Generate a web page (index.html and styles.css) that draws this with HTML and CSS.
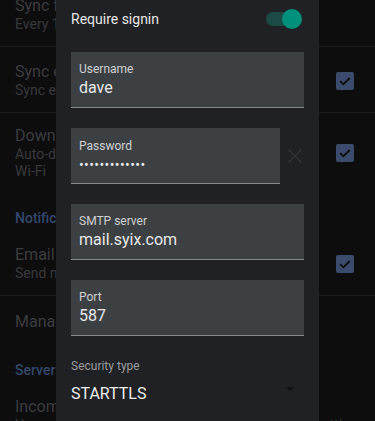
FILE: index.html
```html
<!DOCTYPE html>
<html>
<head>
<meta charset="utf-8">
<link rel="stylesheet" href="styles.css">
</head>
<body>
<div class="screen">
  <div class="list">
    <div class="row first">
      <div class="text">
        <div class="title">Sync frequency</div>
        <div class="sub">Every 15 minutes</div>
      </div>
    </div>
    <div class="divider"></div>
    <div class="row">
      <div class="text">
        <div class="title">Sync emails</div>
        <div class="sub">Sync emails for this account</div>
      </div>
      <span class="check"><svg viewBox="0 0 18 18" width="18" height="18"><path d="M4.2 9.2l3.2 3.1 6.4-6.3" fill="none" stroke="#0d0d0e" stroke-width="1.8"/></svg></span>
    </div>
    <div class="divider"></div>
    <div class="row tight">
      <div class="text">
        <div class="title">Download attachments</div>
        <div class="sub">Auto-download attachments when connected to</div>
        <div class="sub">Wi-Fi</div>
      </div>
      <span class="check"><svg viewBox="0 0 18 18" width="18" height="18"><path d="M4.2 9.2l3.2 3.1 6.4-6.3" fill="none" stroke="#0d0d0e" stroke-width="1.8"/></svg></span>
    </div>
    <div class="category">Notification settings</div>
    <div class="row email">
      <div class="text">
        <div class="title">Email notifications</div>
        <div class="sub">Send notifications when email arrives</div>
      </div>
      <span class="check"><svg viewBox="0 0 18 18" width="18" height="18"><path d="M4.2 9.2l3.2 3.1 6.4-6.3" fill="none" stroke="#0d0d0e" stroke-width="1.8"/></svg></span>
    </div>
    <div class="divider"></div>
    <div class="row single">
      <div class="text">
        <div class="title">Manage notifications</div>
      </div>
    </div>
    <div class="category server">Server settings</div>
    <div class="row incoming">
      <div class="text">
        <div class="title">Incoming server</div>
        <div class="sub">Username, password and other incoming server settings</div>
      </div>
    </div>
  </div>

  <div class="dialog">
    <div class="switch-row">
      <span class="switch-label">Require signin</span>
      <span class="switch"><span class="track"></span><span class="thumb"></span></span>
    </div>
    <div class="field">
      <div class="label">Username</div>
      <div class="value">dave</div>
    </div>
    <div class="field-row">
      <div class="field pw">
        <div class="label">Password</div>
        <div class="value dots">•••••••••••••</div>
      </div>
      <span class="clear"><svg viewBox="0 0 16 16" width="16" height="16"><path d="M1.5 1.5L14.5 14.5M14.5 1.5L1.5 14.5" stroke="#303134" stroke-width="1.5" fill="none"/></svg></span>
    </div>
    <div class="field">
      <div class="label">SMTP server</div>
      <div class="value">mail.syix.com</div>
    </div>
    <div class="field port">
      <div class="label">Port</div>
      <div class="value">587</div>
    </div>
    <div class="sec-label">Security type</div>
    <div class="select">
      <span class="sel-value">STARTTLS</span>
      <span class="arrow"></span>
    </div>
  </div>
</div>
</body>
</html>
```
FILE: styles.css
```css
html, body {
  margin: 0;
  padding: 0;
  background: #0d0d0e;
}
body {
  font-family: Roboto, "Noto Sans", sans-serif;
  width: 375px;
  height: 421px;
  overflow: hidden;
}
.screen {
  position: relative;
  width: 375px;
  height: 421px;
  overflow: hidden;
}
.list {
  margin-top: -19px;
}
.row {
  display: flex;
  align-items: center;
  padding: 15px 21px 13px 15px;
  white-space: nowrap;
  overflow: hidden;
}
.row.tight {
  padding-top: 13px;
}
.row.single {
  padding: 16px 21px 16px 15px;
}
.row.incoming {
  padding-top: 15px;
}
.text {
  flex: 1;
  min-width: 0;
  overflow: hidden;
}
.title {
  font-size: 16px;
  line-height: 20px;
  color: #3b3c3e;
}
.sub {
  font-size: 14px;
  line-height: 17px;
  color: #38393b;
}
.check {
  flex: none;
  width: 18px;
  height: 18px;
  border-radius: 2px;
  background: #3a4b6b;
  display: block;
}
.check svg {
  display: block;
}
.divider {
  height: 1px;
  background: #1b1b1d;
}
.category {
  padding: 15px 15px 2px;
  font-size: 14px;
  line-height: 20px;
  color: #33486b;
  font-weight: 500;
}
.category.server {
  padding-top: 12px;
  padding-bottom: 2px;
}

.dialog {
  position: absolute;
  left: 56px;
  top: 0;
  width: 263px;
  bottom: -20px;
  background: #202124;
  box-sizing: border-box;
  padding: 0 15px;
}
.switch-row {
  height: 38px;
  display: flex;
  align-items: center;
  justify-content: space-between;
  margin-bottom: 14px;
}
.switch-label {
  font-size: 14px;
  color: #e6e6e6;
}
.switch {
  position: relative;
  width: 36px;
  height: 20px;
  margin-right: 2px;
}
.track {
  position: absolute;
  left: 0;
  top: 3px;
  width: 34px;
  height: 14px;
  border-radius: 7px;
  background: #1c4b45;
}
.thumb {
  position: absolute;
  right: 0;
  top: 0;
  width: 20px;
  height: 20px;
  border-radius: 50%;
  background: #00917d;
}
.field {
  height: 56px;
  box-sizing: border-box;
  background: #3c4043;
  border-bottom: 1px solid #85888b;
  padding: 10px 8px 0;
  margin-bottom: 20px;
}
.field-row {
  display: flex;
  align-items: center;
  margin-bottom: 20px;
}
.field.pw {
  width: 209px;
  margin-bottom: 0;
  padding-top: 11px;
}
.clear {
  margin-left: 7px;
  display: block;
  height: 16px;
}
.clear svg {
  display: block;
}
.field.port {
  margin-top: 1px;
}
.label {
  font-size: 12px;
  line-height: 14px;
  color: #d0d1d2;
}
.value {
  margin-top: 2px;
  font-size: 16px;
  line-height: 20px;
  color: #e8e8e9;
}
.value.dots {
  font-size: 14px;
  letter-spacing: 0.4px;
}
.sec-label {
  margin-top: 22px;
  font-size: 12px;
  line-height: 16px;
  color: #9a9b9d;
}
.select {
  margin-top: 8px;
  height: 22px;
  display: flex;
  align-items: center;
  justify-content: space-between;
}
.sel-value {
  font-size: 16px;
  color: #eeeeee;
}
.arrow {
  width: 0;
  height: 0;
  border-left: 4px solid transparent;
  border-right: 4px solid transparent;
  border-top: 4px solid #0f1011;
  margin-right: 10px;
  margin-bottom: 8px;
}
```
